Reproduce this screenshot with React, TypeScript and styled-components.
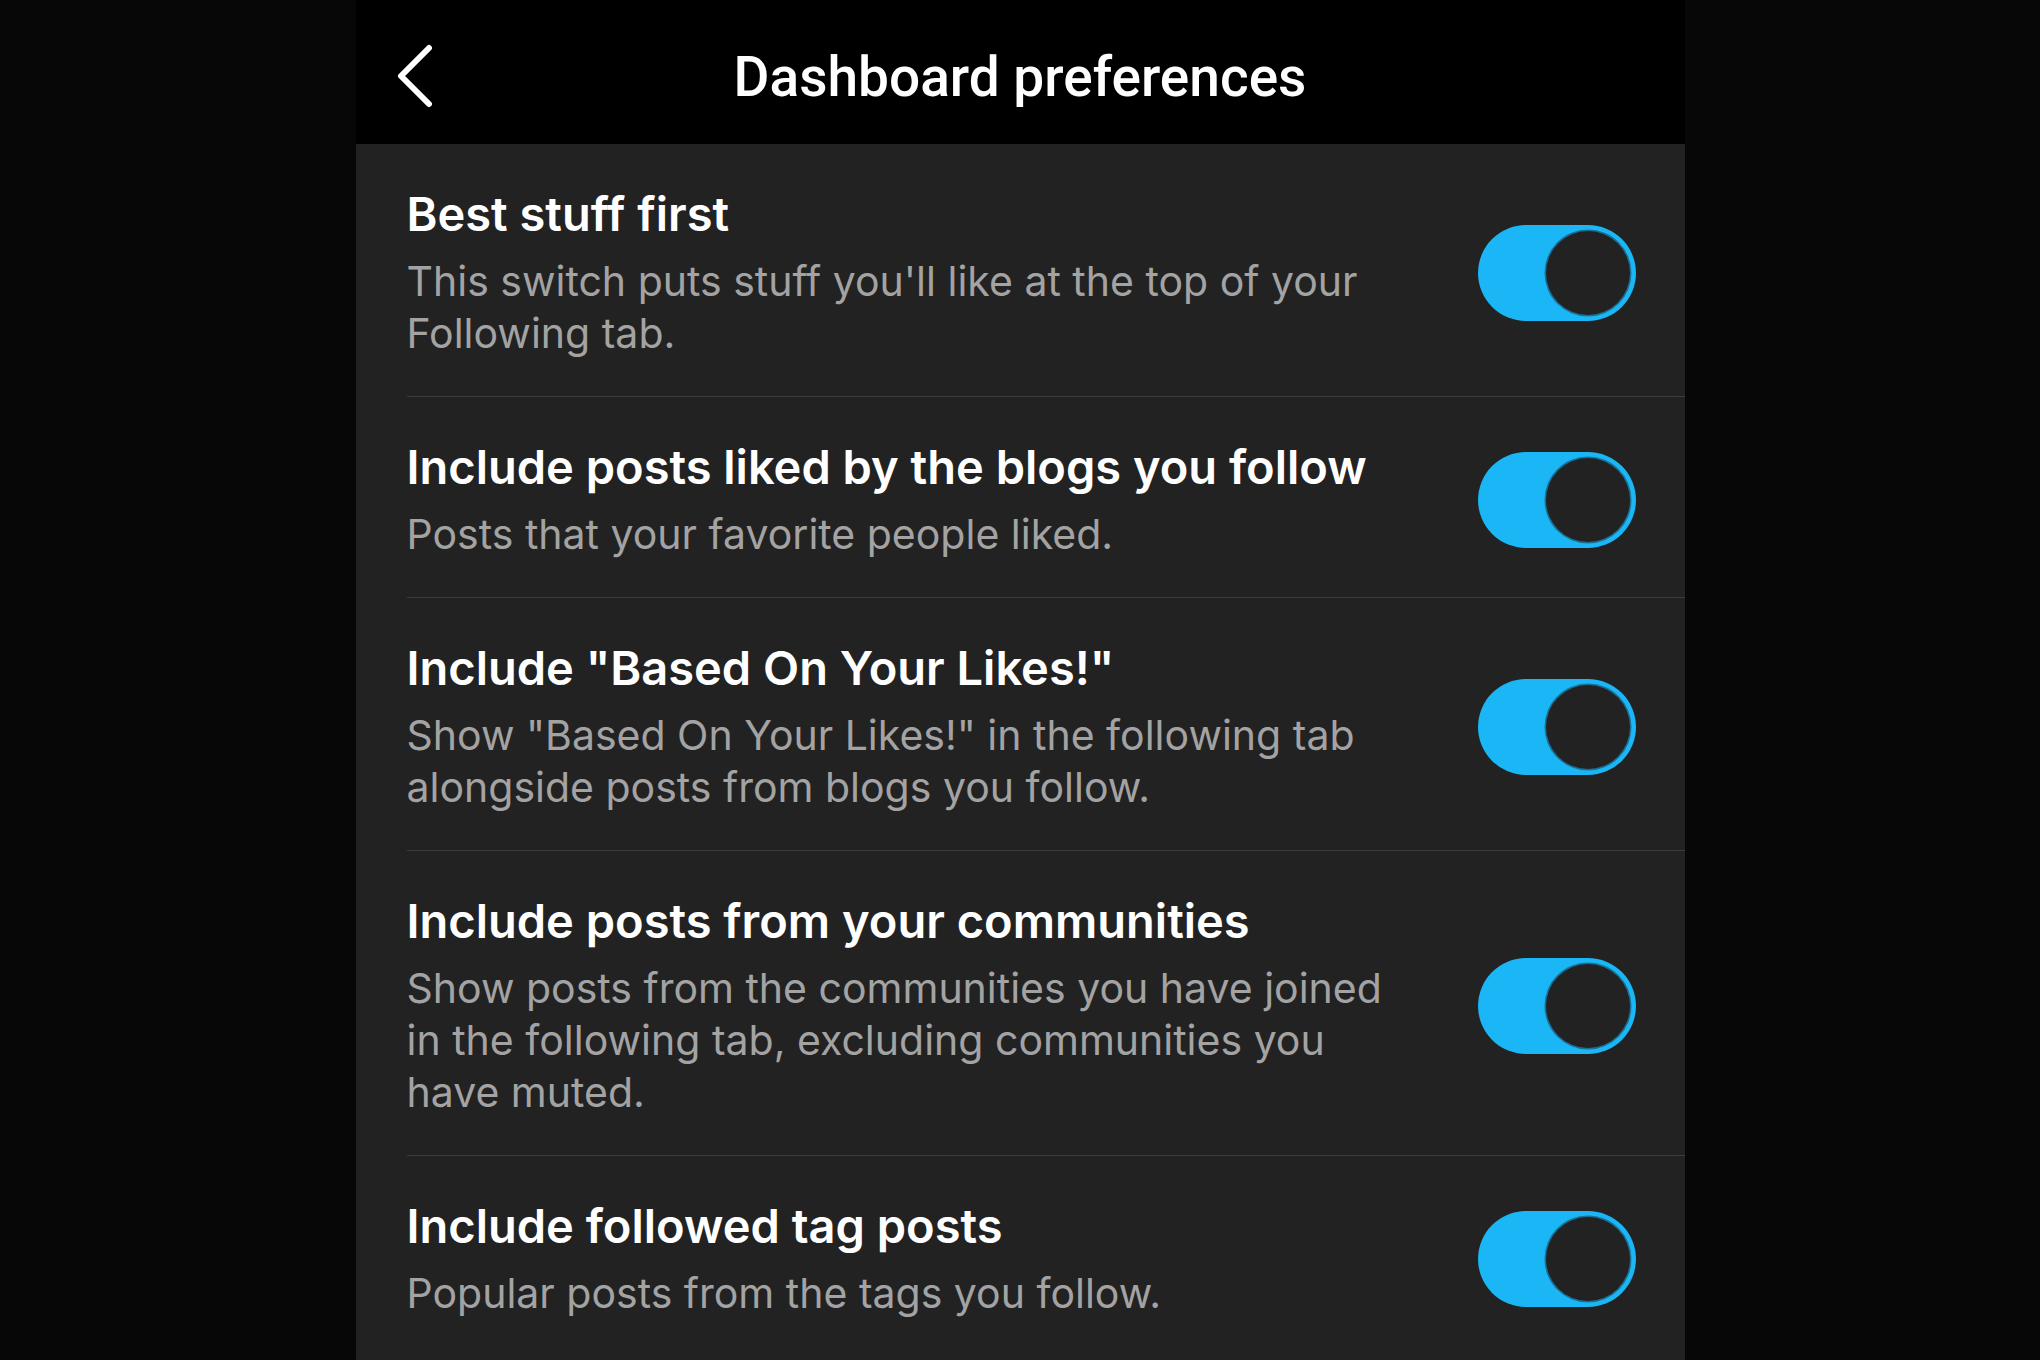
import React, { useState } from "react";
import styled, { createGlobalStyle } from "styled-components";

const GlobalStyle = createGlobalStyle`
  html, body {
    margin: 0;
    padding: 0;
    background: #070707;
    height: 100%;
    overflow: hidden;
  }
  #root {
    height: 100%;
  }
`;

const Page = styled.div`
  display: flex;
  justify-content: center;
  height: 100vh;
  background: #070707;
`;

const Screen = styled.div`
  width: 1329px;
  display: flex;
  flex-direction: column;
  background: #222222;
`;

const Header = styled.header`
  height: 144px;
  flex: none;
  background: #000;
  display: grid;
  grid-template-columns: 144px 1fr 144px;
  align-items: center;
`;

const BackButton = styled.button`
  background: none;
  border: none;
  padding: 8px 0 0 37px;
  margin: 0;
  display: flex;
  align-items: center;
  height: 100%;
  cursor: pointer;
`;

const HeaderTitle = styled.h1`
  margin: 0;
  padding-top: 10px;
  text-align: center;
  color: #fff;
  font-family: Roboto, "Liberation Sans", sans-serif;
  font-weight: 500;
  font-size: 55px;
  line-height: 1;
`;

const List = styled.ul`
  list-style: none;
  margin: 0;
  padding: 0 0 0 51px;
  flex: 1;
`;

const Row = styled.li<{ $last?: boolean }>`
  display: flex;
  align-items: center;
  gap: 40px;
  padding: 42px 49px 37px 0;
  border-bottom: ${(p) => (p.$last ? "none" : "1px solid #3b3b3b")};
`;

const TextBlock = styled.div`
  flex: 1;
  min-width: 0;
`;

const Title = styled.div`
  color: #fff;
  font-family: Inter, Roboto, sans-serif;
  font-weight: 600;
  font-size: 47px;
  line-height: 56px;
`;

const Description = styled.div`
  margin-top: 13px;
  color: #a3a3a3;
  font-family: Inter, Roboto, sans-serif;
  font-weight: 400;
  font-size: 41px;
  line-height: 52px;
  max-width: 1005px;
`;

const Track = styled.button<{ $on: boolean }>`
  flex: none;
  width: 158px;
  height: 96px;
  border-radius: 48px;
  border: none;
  padding: 6px;
  margin: 0;
  display: flex;
  justify-content: ${(p) => (p.$on ? "flex-end" : "flex-start")};
  align-items: center;
  background: ${(p) => (p.$on ? "#1ab6f5" : "#555")};
  cursor: pointer;
  box-sizing: border-box;
`;

const Knob = styled.span`
  width: 84px;
  height: 84px;
  border-radius: 50%;
  background: #222222;
  box-shadow: 0 0 0 1.5px #1a6f93;
`;

const ChevronLeft = () => (
  <svg width="42" height="64" viewBox="0 0 42 64" fill="none">
    <path
      d="M36 4 L8 32 L36 60"
      stroke="#fff"
      strokeWidth="6"
      strokeLinecap="round"
      strokeLinejoin="round"
    />
  </svg>
);

type Pref = { title: string; description: string };

const prefs: Pref[] = [
  {
    title: "Best stuff first",
    description:
      "This switch puts stuff you'll like at the top of your Following tab.",
  },
  {
    title: "Include posts liked by the blogs you follow",
    description: "Posts that your favorite people liked.",
  },
  {
    title: 'Include "Based On Your Likes!"',
    description:
      'Show "Based On Your Likes!" in the following tab alongside posts from blogs you follow.',
  },
  {
    title: "Include posts from your communities",
    description:
      "Show posts from the communities you have joined in the following tab, excluding communities you have muted.",
  },
  {
    title: "Include followed tag posts",
    description: "Popular posts from the tags you follow.",
  },
];

export default function App() {
  const [values, setValues] = useState<boolean[]>(prefs.map(() => true));
  const toggle = (i: number) =>
    setValues((v) => v.map((x, j) => (j === i ? !x : x)));

  return (
    <>
      <GlobalStyle />
      <Page>
        <Screen>
          <Header>
            <BackButton aria-label="Back">
              <ChevronLeft />
            </BackButton>
            <HeaderTitle>Dashboard preferences</HeaderTitle>
            <span />
          </Header>
          <List>
            {prefs.map((p, i) => (
              <Row key={p.title} $last={i === prefs.length - 1}>
                <TextBlock>
                  <Title>{p.title}</Title>
                  <Description>{p.description}</Description>
                </TextBlock>
                <Track
                  role="switch"
                  aria-checked={values[i]}
                  $on={values[i]}
                  onClick={() => toggle(i)}
                >
                  <Knob />
                </Track>
              </Row>
            ))}
          </List>
        </Screen>
      </Page>
    </>
  );
}
